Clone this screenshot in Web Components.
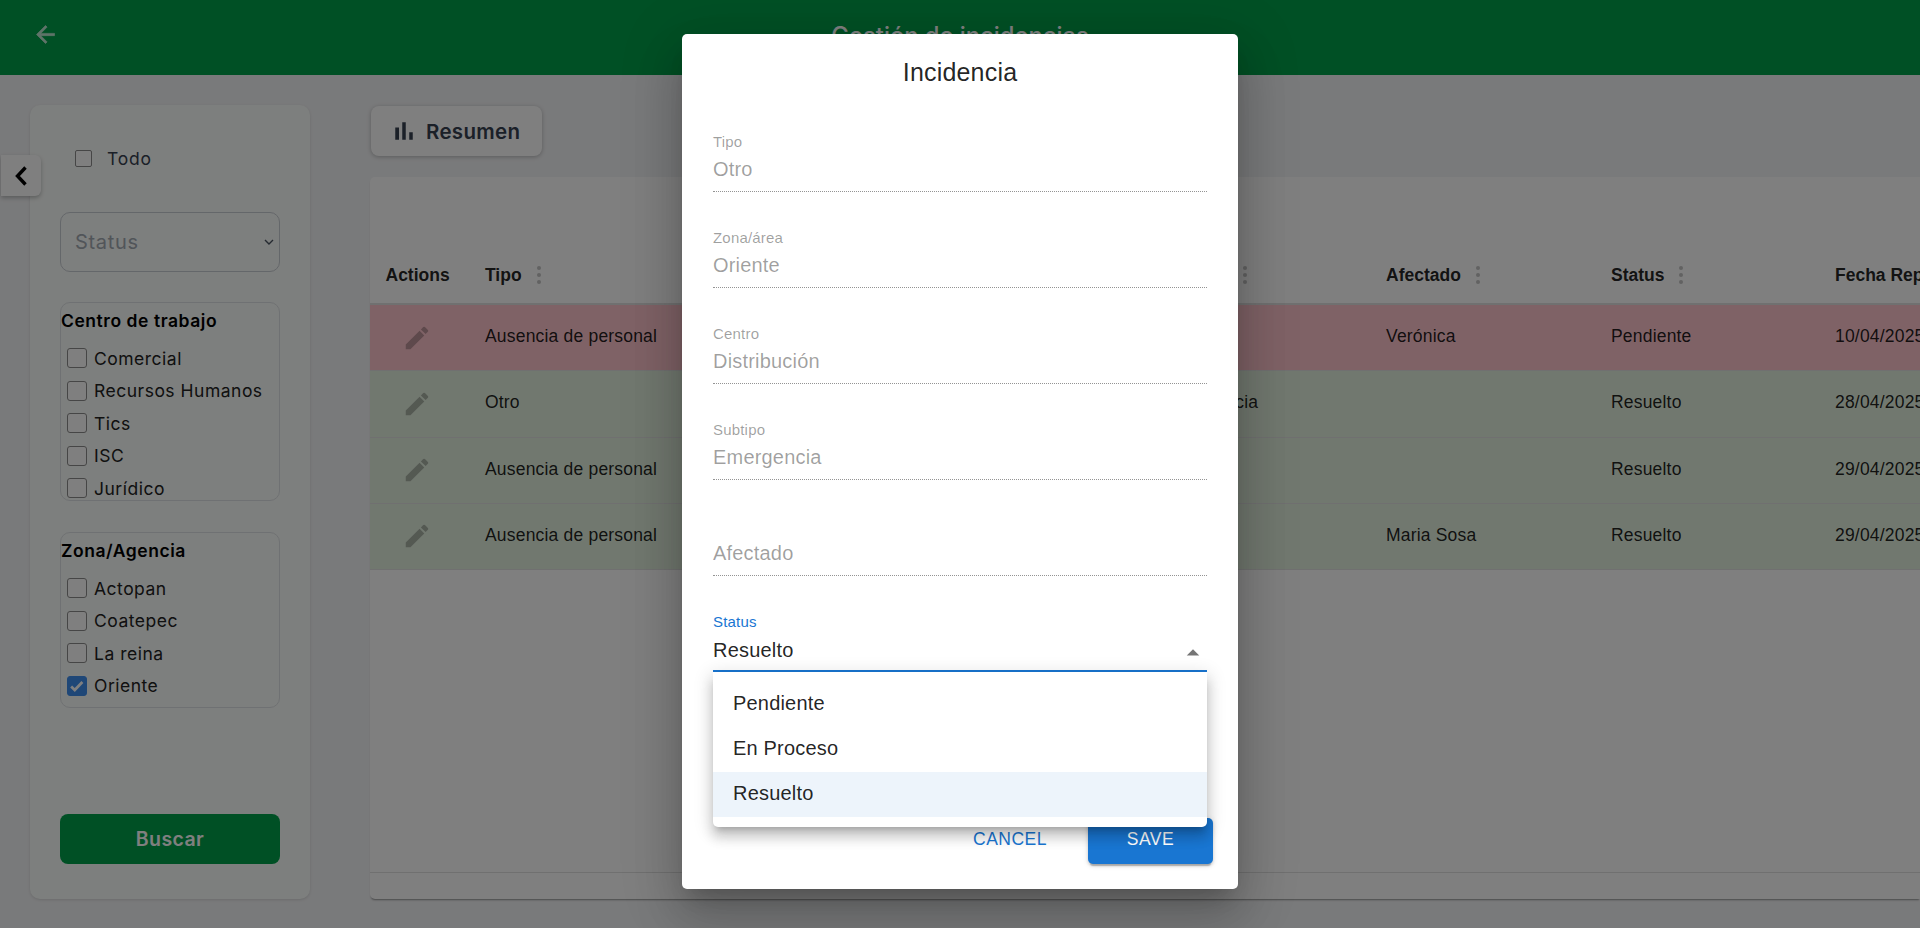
<!DOCTYPE html>
<html lang="es">
<head>
<meta charset="utf-8">
<title>Gestión de incidencias</title>
<style>
    html, body{
        margin: 0;
        height: 928px;
        overflow: hidden;
        background: #f3f4f6;
        font-family: "Liberation Sans", Arial, sans-serif;
    }
</style>
</head>
<body>
<inc-page></inc-page>

<script>
const SIDE_FONT = `Inter, "Liberation Sans", sans-serif`;

class IncCheck extends HTMLElement{
    constructor(){
        super();
        this.attachShadow({mode: "open"});
        this.shadowRoot.innerHTML = `
<style>
    :host{
        display: flex;
        align-items: center;
        gap: 7px;
        height: 32.5px;
        padding-left: 6px;
        font-size: 17.5px;
        letter-spacing: .5px;
        color: #222;
    }
    span{
        box-sizing: border-box;
        width: 20px;
        height: 20px;
        border: 1.5px solid #8c8c8c;
        border-radius: 3px;
        background: #fff;
        display: flex;
        flex: none;
    }
    :host([checked]) span{
        background: #3f8fef;
        border-color: #3f8fef;
    }
    svg{ width: 100%; height: 100%; }
</style>
<span>${this.hasAttribute("checked") ? `<svg viewBox="0 0 20 20"><path d="M3.5 10.5l4 4 8.5-9" fill="none" stroke="#fff" stroke-width="3"/></svg>` : ""}</span>
<slot></slot>`;
    }
}
customElements.define("inc-check", IncCheck);

class IncGroup extends HTMLElement{
    constructor(){
        super();
        this.attachShadow({mode: "open"});
        this.shadowRoot.innerHTML = `
<style>
    :host{
        display: block;
        box-sizing: border-box;
        border: 1px solid #dfe3e6;
        border-radius: 10px;
        overflow: hidden;
        margin-top: 30px;
    }
    h3{
        margin: 0;
        height: 39px;
        line-height: 36px;
        font-size: 17.5px;
        font-weight: 600;
        letter-spacing: .55px;
        color: #000;
    }
</style>
<h3>${this.getAttribute("data-title")}</h3>
<slot></slot>`;
    }
}
customElements.define("inc-group", IncGroup);

class IncHeader extends HTMLElement{
    constructor(){
        super();
        this.attachShadow({mode: "open"});
        this.shadowRoot.innerHTML = `
<style>
    :host{
        display: flex;
        height: 75px;
        background: #00a14b;
        position: relative;
        justify-content: center;
        align-items: flex-start;
        color: #fff;
        font-family: ${SIDE_FONT};
    }
    svg{
        position: absolute;
        left: 31.5px;
        top: 21px;
        width: 27px;
        height: 27px;
        fill: #fff;
        stroke: #fff;
        stroke-width: .6;
        opacity: .75;
    }
    h1{
        margin: 21px 0 0;
        font-size: 23.75px;
        line-height: 30px;
        font-weight: 500;
    }
</style>
<svg viewBox="0 0 24 24"><path d="M20 11H7.83l5.59-5.59L12 4l-8 8 8 8 1.41-1.41L7.83 13H20v-2z"/></svg>
<h1>Gestión de incidencias</h1>`;
    }
}
customElements.define("inc-header", IncHeader);

class IncSidebar extends HTMLElement{
    constructor(){
        super();
        this.attachShadow({mode: "open"});
        this.shadowRoot.innerHTML = `
<style>
    :host{
        display: flex;
        flex-direction: column;
        box-sizing: border-box;
        width: 280px;
        height: 794px;
        padding: 0 30px;
        background: #fbfefc;
        border-radius: 10px;
        box-shadow: 0 1px 3px rgba(0,0,0,.12);
        font-family: ${SIDE_FONT};
    }
    .todo{
        display: flex;
        align-items: center;
        gap: 15px;
        height: 17px;
        margin: 45px 0 0 15px;
        font-size: 17.5px;
        letter-spacing: .8px;
        color: #374151;
    }
    .todo i{
        box-sizing: border-box;
        width: 17px;
        height: 17px;
        border: 1.5px solid #8c8c8c;
        border-radius: 2px;
        background: #fff;
    }
    .select{
        box-sizing: border-box;
        display: flex;
        align-items: center;
        justify-content: space-between;
        height: 60px;
        margin-top: 45px;
        padding: 0 5px 0 14px;
        border: 1px solid #c9ced4;
        border-radius: 10px;
        font-size: 20px;
        letter-spacing: .7px;
        color: #a3aab3;
    }
    .select svg{ width: 10px; height: 8px; }
    .centro{ height: 199px; }
    .zona{ height: 176px; margin-top: 31px; }
    button{
        margin-top: auto;
        margin-bottom: 35px;
        height: 50px;
        border: 0;
        border-radius: 8px;
        background: #00a14b;
        color: #fff;
        font: 600 19.5px ${SIDE_FONT};
        letter-spacing: .4px;
    }
</style>
<div class="todo"><i></i>Todo</div>
<div class="select">Status
    <svg viewBox="0 0 10 8"><path d="M1 2l4 4 4-4" fill="none" stroke="#4b5563" stroke-width="1.4"/></svg>
</div>
<inc-group class="centro" data-title="Centro de trabajo">
    <inc-check>Comercial</inc-check>
    <inc-check>Recursos Humanos</inc-check>
    <inc-check>Tics</inc-check>
    <inc-check>ISC</inc-check>
    <inc-check>Jurídico</inc-check>
</inc-group>
<inc-group class="zona" data-title="Zona/Agencia">
    <inc-check>Actopan</inc-check>
    <inc-check>Coatepec</inc-check>
    <inc-check>La reina</inc-check>
    <inc-check checked>Oriente</inc-check>
</inc-group>
<button>Buscar</button>`;
    }
}
customElements.define("inc-sidebar", IncSidebar);

const COLUMNS = "99px 225px 225px 228px 223px 225px 224px 224px";
const DOTS = `<svg viewBox="0 0 4 18"><circle cx="2" cy="2" r="2"/><circle cx="2" cy="9" r="2"/><circle cx="2" cy="16" r="2"/></svg>`;
const PENCIL = `<svg viewBox="0 0 24 24"><path d="M3 17.25V21h3.75L17.81 9.94l-3.75-3.75L3 17.25zM20.71 7.04c.39-.39.39-1.02 0-1.41l-2.34-2.34a.9959.9959 0 0 0-1.41 0l-1.83 1.83 3.75 3.75 1.83-1.83z"/></svg>`;

class IncRow extends HTMLElement{
    constructor(){
        super();
        this.attachShadow({mode: "open"});
        const tipo = this.getAttribute("data-tipo");
        const subtipo = this.getAttribute("data-subtipo") || "";
        const afectado = this.getAttribute("data-afectado") || "";
        const status = this.getAttribute("data-status");
        const fecha = this.getAttribute("data-fecha");
        this.shadowRoot.innerHTML = `
<style>
    :host{
        display: grid;
        grid-template-columns: ${COLUMNS};
        width: max-content;
        min-width: 100%;
        height: 66.25px;
        align-items: center;
        box-sizing: border-box;
        border-bottom: 1px solid #e0e0e0;
        font-size: 17.5px;
        letter-spacing: .19px;
        color: rgba(0,0,0,.87);
        white-space: nowrap;
        background: #e3f0df;
    }
    :host([data-status="Pendiente"]){ background: #ffc5cd; }
    div{ padding: 0 0 2px 16px; }
    svg{ display: block; width: 30px; height: 30px; fill: rgba(0,0,0,.26); }
    .a{ padding: 0; }
    .a svg{ margin-left: 31.5px; }
</style>
<div class="a">${PENCIL}</div>
<div>${tipo}</div><div></div><div></div>
<div>${subtipo}</div>
<div>${afectado}</div>
<div>${status}</div>
<div>${fecha}</div>`;
    }
}
customElements.define("inc-row", IncRow);

class IncTable extends HTMLElement{
    constructor(){
        super();
        this.attachShadow({mode: "open"});
        this.shadowRoot.innerHTML = `
<style>
    :host{
        display: flex;
        flex-direction: column;
        box-sizing: border-box;
        height: 722px;
        margin-top: 21px;
        background: #fff;
        border-radius: 5px 0 0 5px;
        overflow: hidden;
        box-shadow: 0 2px 2px -1px rgba(0,0,0,.4);
    }
    .head{
        display: grid;
        grid-template-columns: ${COLUMNS};
        width: max-content;
        height: 128px;
        flex: none;
        align-items: end;
        box-sizing: border-box;
        padding-bottom: 17.5px;
        border-bottom: 2px solid #e0e0e0;
        font-size: 17.5px;
        font-weight: 700;
        white-space: nowrap;
        color: rgba(0,0,0,.87);
    }
    .head div{
        display: flex;
        align-items: center;
        gap: 15px;
        padding-left: 16px;
        min-height: 20px;
    }
    .head div:first-child{ padding-left: 15.5px; }
    .head svg{ width: 4px; height: 18px; fill: #c4c4c4; }
    .rows{ flex: 1; }
    .foot{ flex: none; height: 26px; border-top: 1px solid #e0e0e0; }
</style>
<div class="head">
    <div>Actions</div>
    <div>Tipo ${DOTS}</div>
    <div></div>
    <div></div>
    <div>Subtipo ${DOTS}</div>
    <div>Afectado ${DOTS}</div>
    <div>Status ${DOTS}</div>
    <div>Fecha Reporte</div>
</div>
<div class="rows"><slot></slot></div>
<div class="foot"></div>`;
    }
}
customElements.define("inc-table", IncTable);

class IncField extends HTMLElement{
    constructor(){
        super();
        this.attachShadow({mode: "open"});
        const label = this.getAttribute("data-label");
        this.shadowRoot.innerHTML = `
<style>
    :host{
        display: flex;
        flex-direction: column;
        justify-content: flex-end;
        box-sizing: border-box;
        height: 58px;
        margin-top: 38px;
        position: relative;
        border-bottom: 1px dotted rgba(0,0,0,.42);
        color: rgba(0,0,0,.38);
        font-size: 20px;
        letter-spacing: .19px;
    }
    :host(:first-child){ margin-top: 20px; }
    label{
        position: absolute;
        left: 0;
        top: -1px;
        font-size: 15px;
        line-height: 18px;
    }
    .value{ line-height: 32px; padding-bottom: 6px; }
    :host([data-open]){
        border-bottom: 2px solid #1976d2;
        color: rgba(0,0,0,.87);
    }
    :host([data-open]) label{ color: #1976d2; }
    :host([data-open]) .value{ padding-bottom: 4px; }
    svg{
        position: absolute;
        right: -1px;
        top: 24px;
        width: 30px;
        height: 30px;
        fill: rgba(0,0,0,.54);
    }
</style>
${label ? `<label>${label}</label>` : ""}
<div class="value"><slot></slot></div>
${this.hasAttribute("data-open") ? `<svg viewBox="0 0 24 24"><path d="M7 14l5-5 5 5z"/></svg>` : ""}`;
    }
}
customElements.define("inc-field", IncField);

class IncMenu extends HTMLElement{
    constructor(){
        super();
        this.attachShadow({mode: "open"});
        this.shadowRoot.innerHTML = `
<style>
    :host{
        display: block;
        position: absolute;
        left: 0;
        right: 0;
        top: 100%;
        margin-top: 2px;
        padding: 10px 0;
        background: #fff;
        border-radius: 0 0 5px 5px;
        z-index: 2;
        color: rgba(0,0,0,.87);
        box-shadow: 0 6px 6px -4px rgba(0,0,0,.2), 0 10px 12px 1px rgba(0,0,0,.14), 0 4px 18px 3px rgba(0,0,0,.12);
    }
</style>
<slot></slot>`;
    }
}
customElements.define("inc-menu", IncMenu);

class IncOption extends HTMLElement{
    constructor(){
        super();
        this.attachShadow({mode: "open"});
        this.shadowRoot.innerHTML = `
<style>
    :host{
        display: block;
        height: 45px;
        line-height: 43px;
        padding-left: 20px;
        font-size: 20px;
        letter-spacing: .19px;
    }
    :host([selected]){ background: rgba(25,118,210,.08); }
</style>
<slot></slot>`;
    }
}
customElements.define("inc-option", IncOption);

class IncDialog extends HTMLElement{
    constructor(){
        super();
        this.attachShadow({mode: "open"});
        this.shadowRoot.innerHTML = `
<style>
    :host{
        display: flex;
        flex-direction: column;
        box-sizing: border-box;
        width: 556px;
        height: 855px;
        margin-top: 34px;
        background: #fff;
        border-radius: 5px;
        box-shadow: 0 14px 19px -9px rgba(0,0,0,.2), 0 30px 48px 4px rgba(0,0,0,.14), 0 11px 58px 10px rgba(0,0,0,.12);
        color: rgba(0,0,0,.87);
    }
    h2{
        margin: 0;
        padding: 18px 31px 22px;
        text-align: center;
        font-size: 25px;
        line-height: 40px;
        font-weight: 400;
        letter-spacing: .19px;
    }
    .content{ padding: 0 31px; }
    .actions{
        display: flex;
        justify-content: flex-end;
        align-items: center;
        gap: 31px;
        margin-top: auto;
        padding: 0 25px 25px 0;
    }
    button{
        height: 46px;
        border: 0;
        border-radius: 5px;
        background: none;
        color: #1976d2;
        font: 17.5px "Liberation Sans", Arial, sans-serif;
        letter-spacing: .5px;
        padding: 0 10px 3px;
    }
    .save{
        width: 125px;
        background: #1976d2;
        color: #fff;
        box-shadow: 0 4px 1px -2px rgba(0,0,0,.2), 0 2px 3px rgba(0,0,0,.14), 0 1px 6px rgba(0,0,0,.12);
    }
</style>
<h2>Incidencia</h2>
<div class="content"><slot></slot></div>
<div class="actions">
    <button>CANCEL</button>
    <button class="save">SAVE</button>
</div>`;
    }
}
customElements.define("inc-dialog", IncDialog);

class IncPage extends HTMLElement{
    constructor(){
        super();
        this.attachShadow({mode: "open"});
        this.shadowRoot.innerHTML = `
<style>
    :host{
        display: block;
        width: 1920px;
        height: 928px;
        position: relative;
        overflow: hidden;
    }
    main{
        display: flex;
        gap: 60px;
        padding: 30px 0 0 30px;
    }
    .right{ flex: 1; min-width: 0; overflow: visible; }
    .resumen{
        display: flex;
        align-items: center;
        gap: 7px;
        box-sizing: border-box;
        width: 171px;
        height: 50px;
        margin: 1px 0 0 1px;
        padding-left: 18px;
        border-radius: 8px;
        background: #fff;
        box-shadow: 0 1px 4px rgba(0,0,0,.25);
        color: #374151;
        font: 600 20.5px ${SIDE_FONT};
        letter-spacing: .3px;
    }
    .resumen svg{ width: 30px; height: 30px; fill: #374151; flex: none; }
    .toggle{
        position: absolute;
        left: 1px;
        top: 155px;
        width: 40px;
        height: 41px;
        display: flex;
        align-items: center;
        justify-content: center;
        background: #fff;
        border-radius: 0 6px 6px 0;
        box-shadow: 0 2px 4px rgba(0,0,0,.25);
    }
    .toggle svg{ width: 14px; height: 20px; }
    .backdrop{
        position: absolute;
        inset: 0;
        background: rgba(0,0,0,.5);
        display: flex;
        justify-content: center;
        align-items: flex-start;
    }
</style>
<inc-header></inc-header>
<main>
    <inc-sidebar></inc-sidebar>
    <div class="right">
        <div class="resumen">
            <svg viewBox="0 0 24 24"><path d="M5 9.2h3V19H5zM10.6 5h2.8v14h-2.8zm5.6 8H19v6h-2.8z"/></svg>
            Resumen
        </div>
        <inc-table>
            <inc-row data-tipo="Ausencia de personal" data-afectado="Verónica" data-status="Pendiente" data-fecha="10/04/2025"></inc-row>
            <inc-row data-tipo="Otro" data-subtipo="Emergencia" data-status="Resuelto" data-fecha="28/04/2025"></inc-row>
            <inc-row data-tipo="Ausencia de personal" data-status="Resuelto" data-fecha="29/04/2025"></inc-row>
            <inc-row data-tipo="Ausencia de personal" data-afectado="Maria Sosa" data-status="Resuelto" data-fecha="29/04/2025"></inc-row>
        </inc-table>
    </div>
</main>
<div class="toggle">
    <svg viewBox="0 0 14 20"><path d="M11.5 1.5L3.5 10l8 8.5" fill="none" stroke="#000" stroke-width="3.4"/></svg>
</div>
<div class="backdrop">
    <inc-dialog>
        <inc-field data-label="Tipo">Otro</inc-field>
        <inc-field data-label="Zona/área">Oriente</inc-field>
        <inc-field data-label="Centro">Distribución</inc-field>
        <inc-field data-label="Subtipo">Emergencia</inc-field>
        <inc-field>Afectado</inc-field>
        <inc-field data-label="Status" data-open>Resuelto
            <inc-menu>
                <inc-option>Pendiente</inc-option>
                <inc-option>En Proceso</inc-option>
                <inc-option selected>Resuelto</inc-option>
            </inc-menu>
        </inc-field>
    </inc-dialog>
</div>`;
    }
}
customElements.define("inc-page", IncPage);
</script>
</body>
</html>
